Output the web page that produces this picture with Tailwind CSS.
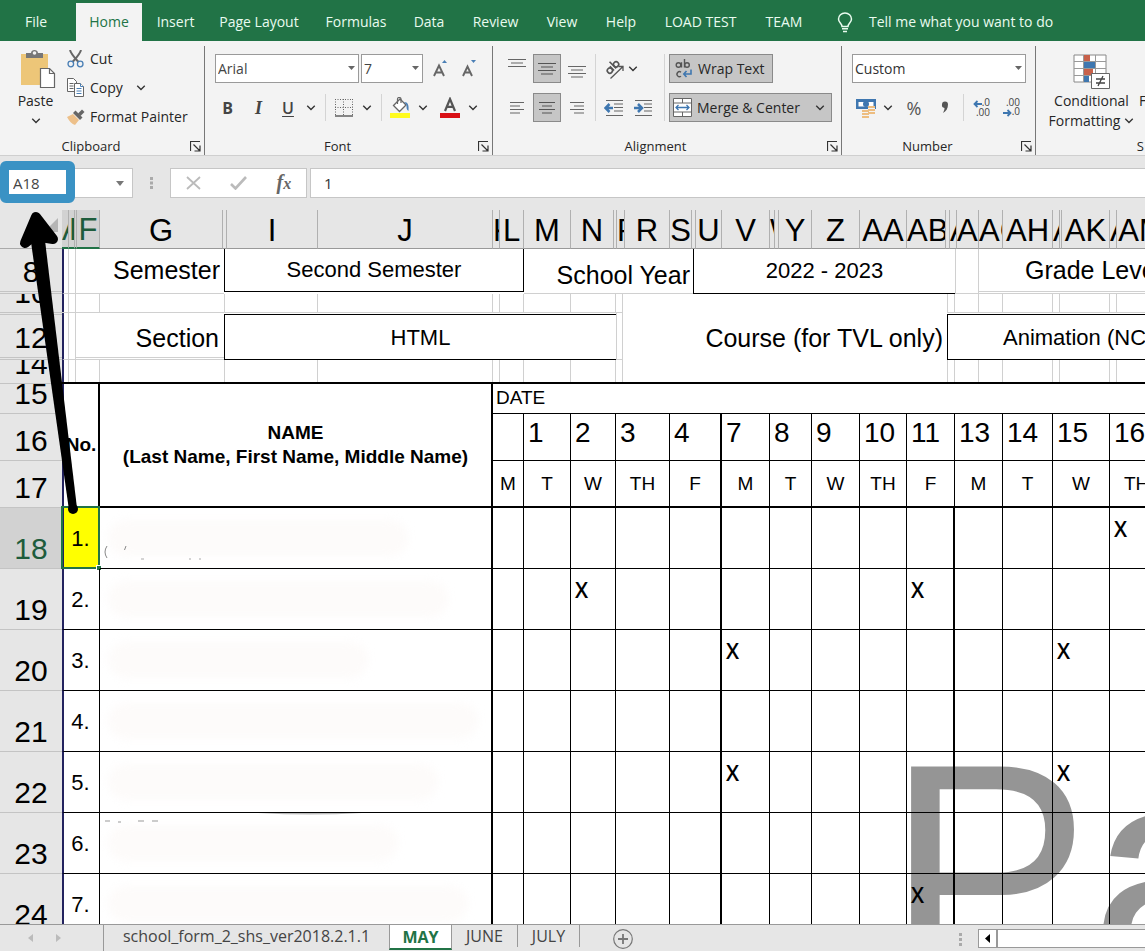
<!DOCTYPE html>
<html lang="en">
<head>
<meta charset="utf-8">
<meta name="viewport" content="width=device-width, initial-scale=1">
<title>school_form_2_shs_ver2018.2.1.1</title>
<script src="https://cdn.jsdelivr.net/npm/@tailwindcss/browser@4"></script>
</head>
<body class="relative flex h-screen flex-col overflow-hidden bg-white font-['Open_Sans','Noto_Sans',sans-serif] text-sm text-[#262626]">

<svg class="hidden" aria-hidden="true">
  <symbol id="chev" viewBox="0 0 8 6"><path d="M1 1.200 4 4.200 7 1.200" fill="none" stroke="#333" stroke-width="1.100"/></symbol>
  <symbol id="launch" viewBox="0 0 11 11"><path d="M.5 10V.5H10M3.500 3.500l6 6M10 4.500V10H4.500" fill="none" stroke="#333" stroke-width="1.200"/></symbol>
</svg>

<!-- Ribbon tabs -->
<nav class="flex h-[41px] shrink-0 items-end overflow-hidden whitespace-nowrap bg-[#217346] text-[#e9fbef]" aria-label="Ribbon tabs">
  <button class="h-[38px] w-[76px] pr-1">File</button>
  <button class="h-[38px] w-[66px] bg-[#f3f3f3] text-[#217346]">Home</button>
  <button class="h-[38px] w-[63px] pl-1">Insert</button>
  <button class="h-[38px] w-[108px]">Page Layout</button>
  <button class="h-[38px] w-[86px]">Formulas</button>
  <button class="h-[38px] w-[60px]">Data</button>
  <button class="h-[38px] w-[73px]">Review</button>
  <button class="h-[38px] w-[60px]">View</button>
  <button class="h-[38px] w-[58px]">Help</button>
  <button class="h-[38px] w-[101px]">LOAD TEST</button>
  <button class="h-[38px] w-[66px]">TEAM</button>
  <button class="flex h-[38px] items-center gap-4 pl-5">
    <svg class="h-[21px] w-4" viewBox="0 0 16 21" fill="none" stroke="#e9fbef" stroke-width="1.500"><path d="M5 14.500C5 11.500 1.500 10.500 1.500 7a6.500 6 0 0 1 13 0C14.500 10.500 11 11.500 11 14.500ZM5 16.800h6M6 19.500h4"/></svg>
    Tell me what you want to do
  </button>
</nav>

<!-- Ribbon -->
<div class="flex h-[115px] shrink-0 overflow-hidden border-b border-[#cfcfcf] bg-[#f3f3f3] pt-[5px] whitespace-nowrap">

  <section class="flex w-[204px] shrink-0 flex-col" aria-label="Clipboard">
    <div class="flex grow">
      <button class="flex w-[67px] flex-col items-center self-start pt-[3px] pl-1">
        <svg class="ml-1 h-10 w-9" viewBox="0 0 36 40"><path d="M1 5h27v31H1z" fill="#edc678"/><path d="M6 9V4h5c0-4 7-4 7 0h5v5z" fill="#777"/><circle cx="14.500" cy="4" r="1.800" fill="#f3f3f3"/><path d="M20.500 19.500h9l5 5v14h-14z" fill="#fff" stroke="#666" stroke-width="1.200"/><path d="M29.500 19.500v5h5" fill="none" stroke="#666" stroke-width="1.200"/></svg>
        <span class="leading-6">Paste</span>
        <svg class="mt-1 h-2 w-[10px]"><use href="#chev"/></svg>
      </button>
      <div class="flex flex-col">
        <button class="flex h-[29px] items-center gap-[6px] pb-1">
          <svg class="h-[18px] w-[17px]" viewBox="0 0 17 18"><path d="M3 0c1 4 3 6 8.500 12M14 0c-1 4-3 6-8.500 12" stroke="#666" stroke-width="2" fill="none"/><circle cx="3.800" cy="14" r="2.800" fill="none" stroke="#4a7fb5" stroke-width="1.300"/><circle cx="13.200" cy="14" r="2.800" fill="none" stroke="#4a7fb5" stroke-width="1.300"/></svg>
          Cut
        </button>
        <button class="flex h-[29px] items-center gap-[6px] pb-1">
          <svg class="h-[19px] w-[17px]" viewBox="0 0 17 19" fill="#fff" stroke="#666"><path d="M.5.5h6l3 3v10h-9zM2.500 5.500h4M2.500 8h4M2.500 10.500h4"/><path d="M7.500 5.500h6l3 3v10h-9z"/><path d="M13.500 5.500v3h3M9.500 10.500h5M9.500 13h5M9.500 15.500h5" stroke="#4a7fb5"/></svg>
          Copy
          <svg class="ml-[7px] h-2 w-[10px]"><use href="#chev"/></svg>
        </button>
        <button class="flex h-[29px] items-center gap-[5px] pb-1">
          <svg class="h-[16px] w-[18px]" viewBox="0 0 18 16"><path d="M0 8l6-3 6 6-4 5c-3-1-6-4-8-8z" fill="#edc08a"/><path d="M6 4l2.500-2.500 7 7L13 11z" fill="#666"/><path d="M11 4.500 15 .5l2.500 2.500-4 4z" fill="#666"/></svg>
          Format Painter
        </button>
      </div>
    </div>
    <div class="flex h-[18px] items-center text-[13px]"><span class="w-[182px] text-center">Clipboard</span><button class="ml-2" aria-label="Clipboard settings"><svg class="size-[11px]"><use href="#launch"/></svg></button></div>
  </section>

  <section class="flex w-[288px] shrink-0 flex-col border-l border-[#777]" aria-label="Font">
    <div class="flex h-[37px] items-end pl-[10px]">
      <label class="relative block"><select aria-label="Font name" class="block h-[29px] w-36 appearance-none border border-[#9a9a9a] bg-white pl-[2px] text-sm text-[#444]"><option>Arial</option></select><svg class="absolute top-3 right-1 h-1 w-[7px]"><path d="M0 0h7L3.500 4z" fill="#666"/></svg></label>
      <label class="relative ml-[2px] block"><select aria-label="Font size" class="block h-[29px] w-[62px] appearance-none border border-[#9a9a9a] bg-white pl-[2px] text-sm text-[#444]"><option>7</option></select><svg class="absolute top-3 right-1 h-1 w-[7px]"><path d="M0 0h7L3.500 4z" fill="#666"/></svg></label>
      <button class="ml-[3px] h-[29px] w-[29px]" aria-label="Increase font size"><svg class="mx-auto h-[17px] w-[15px]" viewBox="0 0 15 17"><path d="M1 16 6 5.500 11 16M3 12.500h6" stroke="#666" stroke-width="1.900" fill="none"/><path d="M9 3h5L11.500 0z" fill="#4a7fb5"/></svg></button>
      <button class="h-[29px] w-[29px]" aria-label="Decrease font size"><svg class="mx-auto h-[17px] w-[15px]" viewBox="0 0 15 17"><path d="M1 16 5.500 6.500 10 16M3 12.500h5.500" stroke="#666" stroke-width="1.900" fill="none"/><path d="M9 0h5L11.500 3z" fill="#4a7fb5"/></svg></button>
    </div>
    <div class="mt-[10px] flex h-[29px] items-center pl-2 text-[#444]">
      <button class="w-[29px] text-base font-bold">B</button>
      <button class="w-[33px] font-['Liberation_Serif',serif] text-lg font-bold italic">I</button>
      <button class="w-[26px] text-base font-semibold underline underline-offset-2">U</button>
      <button class="flex w-5 justify-center" aria-label="Underline styles"><svg class="h-2 w-[10px]"><use href="#chev"/></svg></button>
      <span class="mx-1 h-[27px] w-px bg-[#d4d4d4]"></span>
      <button class="flex w-[28px] justify-center" aria-label="Borders"><svg class="size-[18px]" viewBox="0 0 18 18"><path d="M0 .5h18M0 8.500h18M.5 0v17M8.500 0v17M17.500 0v17" stroke="#666" stroke-dasharray="1 1.500" fill="none"/><path d="M0 17h18" stroke="#555" stroke-width="1.400"/></svg></button>
      <button class="flex w-[18px] justify-center" aria-label="Border styles"><svg class="h-2 w-[10px]"><use href="#chev"/></svg></button>
      <span class="mr-1 ml-[5px] h-[27px] w-px bg-[#d4d4d4]"></span>
      <button class="flex w-[28px] justify-center" aria-label="Fill colour"><svg class="h-[21px] w-5" viewBox="0 0 20 21"><path d="M0 16h20v5H0z" fill="#fffb1e"/><path d="M3.500 8.500 10 2l6 6-6.500 6.500z" fill="#fff" stroke="#666" stroke-width="1.300"/><path d="M7.500 7V2c0-2 3.500-2 3.500 0v4" fill="none" stroke="#666" stroke-width="1.200"/><path d="M14 5c4 0 5 3 4.500 9-2-1-2-3-2-6z" fill="#4a7fb5"/></svg></button>
      <button class="flex w-[18px] justify-center" aria-label="Fill colours"><svg class="h-2 w-[10px]"><use href="#chev"/></svg></button>
      <button class="ml-[4px] flex w-[28px] flex-col items-center" aria-label="Font colour"><svg class="h-[21px] w-5" viewBox="0 0 20 21"><path d="M0 16h20v5H0z" fill="#d90f15"/><path d="M5 14 10 2l5 12M7 9.800h6" stroke="#555" stroke-width="2.200" fill="none"/></svg></button>
      <button class="flex w-[18px] justify-center" aria-label="Font colours"><svg class="h-2 w-[10px]"><use href="#chev"/></svg></button>
    </div>
    <div class="mt-auto flex h-[18px] items-center text-[13px]"><span class="w-[265px] text-center">Font</span><button class="ml-2" aria-label="Font settings"><svg class="size-[11px]"><use href="#launch"/></svg></button></div>
  </section>

  <section class="flex w-[349px] shrink-0 flex-col border-l border-[#777]" aria-label="Alignment">
    <div class="flex grow pt-2 pl-[10px]">
      <div class="flex flex-col gap-[10px]">
        <div class="flex h-[29px]">
          <button class="flex w-[30px] pl-[5px]" aria-label="Top align"><svg class="h-[27px] w-5" viewBox="0 0 20 27" stroke="#666" stroke-width="1.200"><path d="M0 5.500h18M3 9h12M0 12.500h18"/></svg></button>
          <button class="flex w-7 items-center justify-center border border-[#8a8a8a] bg-[#c6c6c6]" aria-label="Middle align" aria-pressed="true"><svg class="h-[15px] w-[18px]" viewBox="0 0 18 15" stroke="#555" stroke-width="1.200"><path d="M0 2.500h18M3 6h12M0 9.500h18M3 13h12"/></svg></button>
          <button class="flex w-[34px] pl-[7px]" aria-label="Bottom align"><svg class="h-[27px] w-5" viewBox="0 0 20 27" stroke="#666" stroke-width="1.200"><path d="M0 12.500h18M3 16h12M0 19.500h18M3 23h12"/></svg></button>
        </div>
        <div class="flex h-[29px] items-center">
          <button class="flex w-[30px] pl-[7px]" aria-label="Align left"><svg class="h-[15px] w-4" viewBox="0 0 16 15" stroke="#666" stroke-width="1.200"><path d="M0 2.500h14M0 6h10M0 9.500h14M0 13h10"/></svg></button>
          <button class="flex h-[29px] w-7 items-center justify-center border border-[#8a8a8a] bg-[#c6c6c6]" aria-label="Center" aria-pressed="true"><svg class="h-[15px] w-4" viewBox="0 0 16 15" stroke="#555" stroke-width="1.200"><path d="M0 2.500h16M3 6h10M0 9.500h16M3 13h10"/></svg></button>
          <button class="flex w-[34px] pl-[9px]" aria-label="Align right"><svg class="h-[15px] w-4" viewBox="0 0 16 15" stroke="#666" stroke-width="1.200"><path d="M0 2.500h14M4 6h10M0 9.500h14M4 13h10"/></svg></button>
        </div>
      </div>
      <span class="h-[67px] w-px bg-[#d4d4d4]"></span>
      <div class="flex flex-col gap-[10px] pl-2">
        <div class="flex h-[29px] items-center gap-[2px]">
          <button aria-label="Orientation"><svg class="h-[22px] w-[22px]" viewBox="0 0 22 22" fill="none" stroke="#555"><g transform="rotate(-45 8 9)" stroke-width="1.600"><circle cx="4" cy="10" r="2.600"/><path d="M7 7v6M10 3.500V13"/><circle cx="12.800" cy="10" r="2.600"/></g><path d="M6.500 20.500 19 8.500M14.500 8.500H19V13" stroke-width="1.300"/></svg></button>
          <button aria-label="Orientation options"><svg class="h-2 w-[10px]"><use href="#chev"/></svg></button>
        </div>
        <div class="flex h-[29px] items-center gap-[10px]">
          <button aria-label="Decrease indent"><svg class="h-[18px] w-5" viewBox="0 0 20 18"><path d="M2 1.500h17M10 5h9M10 8.500h9M10 12h9M2 16.500h17" stroke="#666" stroke-width="1.200"/><path d="M9 9H2M5.500 5 1.500 9l4 4" stroke="#3f77b0" stroke-width="2.500" fill="none"/></svg></button>
          <button aria-label="Increase indent"><svg class="h-[18px] w-5" viewBox="0 0 20 18"><path d="M1 1.500h17M10 5h8M10 8.500h8M10 12h8M1 16.500h17" stroke="#666" stroke-width="1.200"/><path d="M0 9h7M4 5l4 4-4 4" stroke="#3f77b0" stroke-width="2.500" fill="none"/></svg></button>
        </div>
      </div>
      <span class="ml-[10px] h-[67px] w-px bg-[#d4d4d4]"></span>
      <div class="flex flex-col items-start gap-[10px] pl-1">
        <button class="flex h-[29px] w-[104px] items-center gap-[6px] border border-[#8a8a8a] bg-[#c6c6c6] pl-[5px]"><svg class="h-5 w-[17px]" viewBox="0 0 17 20" fill="none" stroke="#555" stroke-width="1.400"><circle cx="3.500" cy="6" r="2.300"/><path d="M6.500 3.300v5.200M9.500 0v8.500"/><circle cx="12" cy="6" r="2.300"/><path d="M6 13.200a2.500 2.500 0 1 0 0 4"/><path d="M16 10.500v4.500H9M11.500 12 8.800 15l2.700 3" stroke="#3f77b0" stroke-width="1.600"/></svg>Wrap Text</button>
        <button class="flex h-[29px] w-[163px] items-center border border-[#8a8a8a] bg-[#c6c6c6] pl-[3px]"><svg class="mr-[5px] h-[19px] w-[19px]" viewBox="0 0 19 19"><path d="M.5.5h18v18H.5z" fill="#fff" stroke="#666"/><path d="M.5 5h18M.5 14h18M9.500.5V5M9.500 14v4.500" stroke="#666"/><path d="M3 9.500h13M5.500 7 3 9.500 5.500 12M13.500 7 16 9.500 13.500 12" fill="none" stroke="#3f77b0" stroke-width="1.300"/></svg>Merge &amp; Center<svg class="mr-[6px] ml-auto h-2 w-[10px]"><use href="#chev"/></svg></button>
      </div>
    </div>
    <div class="flex h-[18px] items-center text-[13px]"><span class="w-[325px] text-center">Alignment</span><button class="ml-[9px]" aria-label="Alignment settings"><svg class="size-[11px]"><use href="#launch"/></svg></button></div>
  </section>

  <section class="flex w-[194px] shrink-0 flex-col border-l border-[#777]" aria-label="Number">
    <div class="flex h-[37px] items-end pl-[10px]">
      <label class="relative block"><select aria-label="Number format" class="block h-[29px] w-[174px] appearance-none border border-[#9a9a9a] bg-white pl-[2px] text-sm text-[#333]"><option>Custom</option></select><svg class="absolute top-3 right-1 h-1 w-[7px]"><path d="M0 0h7L3.500 4z" fill="#666"/></svg></label>
    </div>
    <div class="mt-[10px] flex h-[29px] items-center pl-[14px]">
      <button aria-label="Accounting format"><svg class="h-5 w-5" viewBox="0 0 20 20"><path d="M0 1h20v10H0z" fill="#3f77b0"/><path d="M2.500 4h15v4.500h-15z" fill="#fff"/><ellipse cx="10" cy="6" rx="3" ry="3" fill="#3f77b0"/><path d="M12 8h7v9h-7zM6 13h7v7H6z" fill="#f3f3f3"/><path d="M12 8h7v2h-7zM12 11h7v2h-7zM12 14h7v2h-7zM6 12h7v2H6zM6 15h7v2H6zM6 18h7v2H6z" fill="#edbd80"/></svg></button>
      <button class="ml-[7px]" aria-label="Accounting formats"><svg class="h-2 w-[10px]"><use href="#chev"/></svg></button>
      <button class="ml-3 w-[18px] text-lg text-[#555]">%</button>
      <button class="ml-[14px] flex w-4 justify-center" aria-label="Comma style"><svg class="h-[13px] w-2" viewBox="0 0 8 13"><path d="M1 3.500a3 3 0 0 1 6 0C7 7.500 5 10.500 2 12c1-2 1.500-3.500 1.500-5A3 3 0 0 1 1 3.500z" fill="#555"/></svg></button>
      <span class="ml-[10px] h-[27px] w-px bg-[#d4d4d4]"></span>
      <button class="ml-2 w-[18px] text-right text-[10px] leading-[9px] text-[#444]"><svg class="inline h-2 w-[9px]" viewBox="0 0 9 8"><path d="M9 4H2M4.500 1 1.500 4l3 3" stroke="#3f77b0" stroke-width="1.800" fill="none"/></svg>.0<br>.00</button>
      <button class="ml-3 w-[18px] text-right text-[10px] leading-[9px] text-[#444]">.00<br><svg class="inline h-2 w-[9px]" viewBox="0 0 9 8"><path d="M0 4h7M4.500 1l3 3-3 3" stroke="#3f77b0" stroke-width="1.800" fill="none"/></svg>.0</button>
    </div>
    <div class="mt-auto flex h-[18px] items-center text-[13px]"><span class="w-[171px] text-center">Number</span><button class="ml-2" aria-label="Number settings"><svg class="size-[11px]"><use href="#launch"/></svg></button></div>
  </section>

  <section class="flex min-w-0 grow flex-col overflow-hidden border-l border-[#777]" aria-label="Styles">
    <div class="flex grow">
      <button class="flex w-[103px] shrink-0 flex-col items-center self-start pt-2 pl-2 leading-5">
        <svg class="h-[35px] w-[38px]" viewBox="0 0 38 35"><path d="M1 1h32v27H1z" fill="#fff" stroke="#888"/><path d="M11 1h6v7h-6zM11 15h9v6h-9z" fill="#c8614a"/><path d="M11 8h11v7H11zM11 21h5v7h-5z" fill="#3f77b0"/><path d="M1 7.500h32M1 14.500h32M1 21.500h32M10.500 1v27M22.500 1v27" stroke="#999" fill="none"/><path d="M18.500 19.500h18v15h-18z" fill="#fff" stroke="#666"/><path d="M23 25h9M23 29h9M30 22l-5 10" stroke="#444" stroke-width="1.300"/></svg>
        <span class="mt-[2px]">Conditional</span>
        <span class="flex items-center gap-1">Formatting<svg class="h-2 w-[10px]"><use href="#chev"/></svg></span>
      </button>
      <button class="shrink-0 self-start pt-[45px] leading-5">F</button>
    </div>
    <div class="h-[18px] pr-px text-right text-[13px] leading-[18px]">S</div>
  </section>
</div>

<!-- Formula bar -->
<div class="relative flex h-[54px] shrink-0 items-center bg-[#e6e6e6]">
  <input aria-label="Name Box" value="A18" class="h-[30px] w-[133px] border border-[#c6c6c6] bg-white pl-3 text-[15px] text-[#444]">
  <svg class="absolute top-[25px] left-[116px] h-[5px] w-2"><path d="M0 0h8L4 5z" fill="#777"/></svg>
  <svg class="ml-4 h-3 w-[5px]"><path d="M1 0h3v3H1zM1 4.500h3v3H1zM1 9h3v3H1z" fill="#aaa"/></svg>
  <div class="ml-4 flex h-[30px] w-[137px] items-center justify-around border border-[#c6c6c6] bg-white">
    <button aria-label="Cancel"><svg class="h-[14px] w-[15px]" viewBox="0 0 15 14"><path d="m1 1 13 12M14 1 1 13" stroke="#bbb" stroke-width="1.800"/></svg></button>
    <button aria-label="Enter"><svg class="h-[14px] w-[17px]" viewBox="0 0 17 14"><path d="m1 8 4.500 4.500L16 1" stroke="#bbb" stroke-width="2.600" fill="none"/></svg></button>
    <button aria-label="Insert Function" class="font-['Liberation_Serif',serif] text-xl leading-6 font-bold text-[#666] italic">f<span class="text-base">x</span></button>
  </div>
  <input aria-label="Formula Bar" value="1" class="ml-[3px] h-[30px] min-w-0 grow border border-r-0 border-[#c6c6c6] bg-white pl-[13px] text-[15px] text-[#333]">
</div>

<!-- Worksheet -->
<main class="relative min-h-0 grow overflow-hidden font-['Liberation_Sans',Arial,sans-serif] text-black">
  <div class="absolute top-[508px] left-[886px] text-[306px] leading-none text-[#959595]" aria-hidden="true">Pa</div>

  <div class="relative flex h-[39px] bg-[#e6e6e6] text-[31px] leading-none">
    <div class="flex w-[62px] shrink-0 items-end justify-end border-b border-[#aaa] pr-1 pb-4"><svg class="h-[14px] w-[14px]"><path d="M14 0v14H0z" fill="#b5b5b5"/></svg></div>
    <div id="cols" class="flex min-w-0 grow overflow-hidden"></div>
  </div>

  <div class="relative flex h-[135px]">
    <div class="w-[62px] shrink-0 bg-[#e6e6e6] text-[30px] leading-none">
      <div class="flex h-[43px] items-end justify-center overflow-hidden border-b border-[#c4c4c4] pb-[4px]">8</div>
      <div class="h-[2px] border-b border-[#c4c4c4]"></div>
      <div class="flex h-[19px] items-end justify-center overflow-hidden border-b border-[#c4c4c4] pb-1">10</div>
      <div class="h-[2px] border-b border-[#c4c4c4]"></div>
      <div class="flex h-[43px] items-end justify-center overflow-hidden border-b border-[#c4c4c4] pb-1">12</div>
      <div class="h-[2px] border-b border-[#c4c4c4]"></div>
      <div class="flex h-[24px] items-end justify-center overflow-hidden border-b border-[#c4c4c4] pb-1">14</div>
    </div>
    <div class="flex min-w-0 grow flex-col overflow-hidden border-b-2 border-black text-[25px] whitespace-nowrap">
      <!-- Row 8 -->
      <div class="flex h-[45px] shrink-0">
        <div class="w-[7px] shrink-0 border-r border-b border-l-2 border-r-[#d0d0d0] border-b-[#d0d0d0] border-l-[#23235f]"></div>
        <div class="w-[7px] shrink-0 border-r border-b border-[#d0d0d0]"></div>
        <div class="w-[148px] shrink-0 border-b border-[#d0d0d0] pr-1 text-right leading-[42px]">Semester</div>
        <div class="h-[43px] w-[300px] shrink-0 border-r border-b border-l border-black text-center text-[22px] leading-[42px]">Second Semester</div>
        <div class="w-[169px] shrink-0 border-b border-[#d0d0d0] pt-[5px] pr-[3px] text-right leading-[43px]">School Year</div>
        <div class="w-[262px] shrink-0 border-b border-l border-black text-center text-[22px] leading-[44px]">2022 - 2023</div>
        <div class="w-6 shrink-0 border-r border-b border-l border-[#d0d0d0]"></div>
        <div class="grow border-b border-[#d0d0d0]"><div class="h-[43px] border-b border-[#d0d0d0] pl-[46px] leading-[42px]">Grade Leve</div></div>
      </div>
      <!-- Rows 10 to 14 -->
      <div class="flex grow">
        <div class="flex w-[561px] shrink-0 flex-col">
          <div class="flex h-[19px] border-b border-[#d0d0d0]" data-lines="left"></div>
          <div class="flex h-[47px]">
            <div class="w-[7px] border-r border-b border-l-2 border-r-[#d0d0d0] border-b-[#d0d0d0] border-l-[#23235f]"></div>
            <div class="w-[7px] border-r border-b border-[#d0d0d0]"></div>
            <div class="w-[148px] border-b border-[#d0d0d0]"><div class="h-[45px] border-b border-[#d0d0d0] pt-[2px] pr-[5px] text-right leading-[46px]">Section</div></div>
            <div class="mt-px w-[392px] border border-r-0 border-black text-center text-[22px] leading-[45px]">HTML</div>
            <div class="w-[7px] border-r border-b border-l border-[#d0d0d0]"></div>
          </div>
          <div class="flex grow" data-lines="left"></div>
        </div>
        <div class="w-[324px] shrink-0 pr-1 text-right leading-[89px]">Course (for TVL only)</div>
        <div class="flex min-w-0 grow flex-col overflow-hidden">
          <div class="flex h-[19px] border-b border-[#d0d0d0]" data-lines="right"></div>
          <div class="mt-px h-[46px] shrink-0 border border-r-0 border-black pl-[55px] text-[22px] leading-[45px]">Animation (NC</div>
          <div class="flex grow" data-lines="right"></div>
        </div>
      </div>
    </div>
  </div>

  <table class="relative w-full table-fixed border-separate border-spacing-0">
    <colgroup><col class="w-[62px]"><col class="w-[38px]"><col class="w-[393px]"><col class="w-[31px]"><col class="w-[47px]"><col class="w-[45px]"><col class="w-[54px]"><col class="w-[52px]"><col class="w-[48px]"><col class="w-[42px]"><col class="w-[48px]"><col class="w-[47px]"><col class="w-[48px]"><col class="w-[48px]"><col class="w-[50px]"><col class="w-[57px]"><col></colgroup>
    <thead>
      <tr class="h-[30px]">
        <th class="bg-[#e6e6e6] p-0 font-normal"><div class="flex h-[30px] items-end justify-center overflow-hidden border-b border-[#c4c4c4] pb-1 text-[30px] leading-none">15</div></th>
        <th rowspan="3" class="border-r-2 border-b-2 border-l-2 border-black border-l-[#23235f] p-0 text-[19px]">No.</th>
        <th rowspan="3" class="border-r-2 border-b-2 border-black p-0 text-[19px] leading-6">NAME<br>(Last Name, First Name, Middle Name)</th>
        <th colspan="14" class="border-b border-black p-0 pb-[2px] pl-[3px] text-left text-[19px] leading-6 font-normal">DATE</th>
      </tr>
      <tr class="h-[47px]" id="dates"></tr>
      <tr class="h-[47px]" id="days"></tr>
    </thead>
    <tbody id="learners"></tbody>
  </table>
</main>

<!-- Sheet tabs -->
<footer class="flex h-[27px] shrink-0 items-start overflow-hidden border-t border-[#999] bg-[#e6e6e6] text-[16px] whitespace-nowrap text-[#444]">
  <div class="flex h-full w-[104px] items-center gap-[23px] border-r border-[#999] pl-7">
    <button aria-label="Previous sheet"><svg class="h-2 w-[5px]"><path d="M5 0v8L0 4z" fill="#bbb"/></svg></button>
    <button aria-label="Next sheet"><svg class="h-2 w-[5px]"><path d="M0 0v8l5-4z" fill="#bbb"/></svg></button>
  </div>
  <button class="h-[22px] w-[285px] leading-[22px]">school_form_2_shs_ver2018.2.1.1</button>
  <button class="h-[25px] w-[63px] border-x border-b-2 border-[#999] border-b-[#217346] bg-white leading-[22px] font-bold text-[#217346]">MAY</button>
  <button class="h-[22px] w-[66px] border-r border-[#999] leading-[22px]">JUNE</button>
  <button class="h-[22px] w-[62px] border-r border-[#999] leading-[22px]">JULY</button>
  <button class="mt-[4px] ml-[33px]" aria-label="New sheet"><svg class="size-5" viewBox="0 0 20 20" fill="none" stroke="#777"><circle cx="10" cy="10" r="9.300" stroke-width="1.200"/><path d="M10 5v10M5 10h10" stroke-width="1.800"/></svg></button>
  <svg class="mt-2 ml-auto h-[13px] w-[3px]"><path d="M0 0h3v3H0zM0 5h3v3H0zM0 10h3v3H0z" fill="#aaa"/></svg>
  <div class="mt-1 ml-4 flex h-[19px] w-[167px] border border-r-0 border-[#999] bg-white">
    <button class="flex w-[19px] items-center justify-center border-r-2 border-[#999]" aria-label="Scroll left"><svg class="h-[9px] w-[5px]"><path d="M5 0v9L0 4.500z" fill="#000"/></svg></button>
  </div>
</footer>

<!-- Callout around the name box and its arrow -->
<div class="pointer-events-none absolute top-[161px] left-0 h-[42px] w-[75px] rounded-md border-[9px] border-[#3a92c4]"></div>
<svg class="pointer-events-none absolute top-[205px] left-0 h-[320px] w-24" viewBox="0 205 96 320" aria-hidden="true">
  <path d="M30 235 44 232 77 508 69 510Z"/><circle cx="73" cy="509" r="5"/>
  <path d="M25 243 36 217 53 239 34 236Z" stroke="#000" stroke-width="10" stroke-linejoin="round"/>
</svg>

<script>
  // Column letters with their widths; wide columns centre the letter, narrow ones clip it.
  const columns = [['A',7],['E',6],['',2],['F',23],['G',123],['',4],['I',91],['J',175],['K',7],['L',24],['M',47],['N',43],['',3],['P',8],['R',45],['S',22],['',4],['U',26],['V',48],['W',5],['',4],['Y',33],['Z',48],['AA',47],['AB',39],['',4],['AC',7],['AF',22],['AG',24],['AH',50],['AI',7],['',2],['AK',48],['AL',7],['AM',50]];
  document.getElementById('cols').innerHTML = columns.map(([name, w], i) => {
    const tone = i < 4 ? 'border-b-2 border-b-[#217346] bg-[#d2d2d2] text-[#1e5c3c]' : 'border-b border-b-[#999]';
    const fit = name.length * 20 > w ? 'justify-start' : 'justify-center';
    return `<div class="flex shrink-0 items-end overflow-hidden border-r border-r-[#b0b0b0] pb-[2px] ${tone} ${fit}" style="width:${w}px">${name}</div>`;
  }).join('');

  const lines = { left: [7,7,24,125,93,175,7,24,47,45,7], right: [1,7,24,24,50,7,50,7] };
  document.querySelectorAll('[data-lines]').forEach(row => {
    const side = row.dataset.lines;
    row.innerHTML = lines[side].map((w, i) => `<div class="shrink-0 border-r border-r-[#d0d0d0] ${side === 'left' && i === 0 ? 'border-l-2 border-l-[#23235f]' : ''}" style="width:${w}px"></div>`).join('');
  });

  const dates = ['','1','2','3','4','7','8','9','10','11','13','14','15','16'];
  const days = ['M','T','W','TH','F','M','T','W','TH','F','M','T','W','TH'];
  const rowHead = n => `<th class="bg-[#e6e6e6] p-0 font-normal"><div class="flex h-[47px] items-end justify-center border-b border-[#c4c4c4] pb-1 text-[30px] leading-none">${n}</div></th>`;
  const edge = i => i === 4 ? 'border-r-2' : i === 13 ? '' : 'border-r';
  document.getElementById('dates').innerHTML = rowHead(16) + dates.map((d, i) =>
    `<th class="overflow-hidden border-b border-black p-0 pt-1 pl-1 text-left align-top text-[28px] leading-[30px] font-normal whitespace-nowrap ${edge(i)}">${d}</th>`).join('');
  document.getElementById('days').innerHTML = rowHead(17) + days.map((d, i) =>
    `<th class="overflow-hidden border-b-2 border-black p-0 text-[19px] leading-6 font-normal whitespace-nowrap ${edge(i)} ${i === 13 ? 'pl-[14px] text-left' : 'text-center'}">${d}</th>`).join('');

  // Absence marks per learner, by date column index.
  const marks = [[13],[2,9],[5,12],[],[5,12],[],[9]];
  const smudge = [300,340,260,370,330,290,360];
  document.getElementById('learners').innerHTML = marks.map((m, r) => {
    const on = r === 0;
    const specks = r === 0 ? '<svg class="absolute top-[34px] left-[4px] h-5 w-[110px]"><path d="M3 4q-4 6 0 12M22 4l-1.500 4" fill="none" stroke="#888"/><path d="M37 17h3M85 17h2M95 17h2" stroke="#aaa"/></svg>'
      : r === 5 ? '<svg class="absolute top-0 left-0 h-3 w-[300px]"><path d="M158 0q52-3 104 0-52 3-104 0z" fill="#bbb"/><path d="M5 8h5M18 9h3M38 8h6M52 8h6" stroke="#999"/></svg>' : '';
    return `<tr class="h-[61px]">
      <th class="p-0 font-normal ${on ? 'bg-[#d2d2d2] text-[#1e5c3c]' : 'bg-[#e6e6e6]'}"><div class="flex h-[61px] items-end justify-center border-b border-[#c4c4c4] pb-1 text-[30px] leading-none">${r + 18}</div></th>
      <td class="relative border-r border-b border-l-2 border-black border-l-[#23235f] p-0 pt-[2px] pr-[2px] text-center text-[22px] ${on ? 'bg-[#ffff00]' : ''}">${r + 1}.${on ? '<div class="absolute -top-[2px] -right-[1px] -bottom-[1px] -left-[3px] border-2 border-[#217346]"></div><div class="absolute -right-[2px] -bottom-[2px] size-[5px] border-t border-l border-white bg-[#217346]"></div>' : ''}</td>
      <td class="relative border-r-2 border-b border-black p-0"><div class="ml-2 h-9 rounded-full bg-[#fdfbfa] blur-xs" style="width:${smudge[r]}px"></div>${specks}</td>
      ${days.map((_, i) => `<td class="overflow-hidden border-b border-black p-0 pt-[9px] pl-1 text-left align-top font-['Open_Sans',sans-serif] text-[21px] leading-6 font-semibold ${i === 4 || i === 9 ? 'border-r-2' : i === 13 ? '' : 'border-r'}">${m.includes(i) ? 'X' : ''}</td>`).join('')}
    </tr>`;
  }).join('');
</script>
</body>
</html>
